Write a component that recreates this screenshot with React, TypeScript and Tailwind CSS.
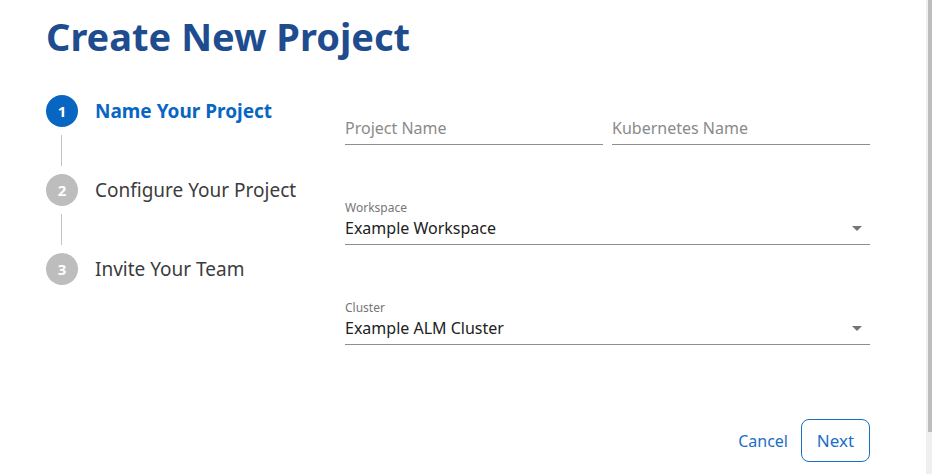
import { useState } from "react";

const steps = [
  { n: 1, label: "Name Your Project" },
  { n: 2, label: "Configure Your Project" },
  { n: 3, label: "Invite Your Team" },
];

function Caret() {
  return (
    <svg width="10" height="5" viewBox="0 0 10 5" className="shrink-0">
      <path d="M0 0h10L5 5z" fill="#757575" />
    </svg>
  );
}

function Select({ label, value }: { label: string; value: string }) {
  return (
    <div className="border-b border-[#8e8e8e] pb-[4px]">
      <div className="text-[12px] leading-[16px] text-[#767676]">{label}</div>
      <div className="flex items-center justify-between pr-[8px]">
        <span className="text-[16px] leading-[24px] text-[#212121]">{value}</span>
        <Caret />
      </div>
    </div>
  );
}

export default function App() {
  const [active] = useState(1);

  return (
    <div className="flex h-[474px] w-full overflow-hidden bg-white font-['Noto_Sans',sans-serif]">
      <div className="flex-1 pl-[46px] pt-[13px]">
        <h1 className="text-[38px] font-bold leading-[46px] text-[#1e4c8f]">Create New Project</h1>

        <div className="mt-[36px] flex">
          {/* Stepper */}
          <div className="w-[299px]">
            {steps.map((s, i) => (
              <div key={s.n}>
                <div className="flex h-[32px] items-center gap-[17px]">
                  <div
                    className={
                      s.n === active
                        ? "flex h-[32px] w-[32px] items-center justify-center rounded-full bg-[#0866c3] text-[15px] font-bold text-white"
                        : "flex h-[32px] w-[32px] items-center justify-center rounded-full bg-[#bdbdbd] text-[15px] font-bold text-white"
                    }
                  >
                    {s.n}
                  </div>
                  <span
                    className={
                      s.n === active
                        ? "text-[19px] font-bold text-[#0866c3]"
                        : "text-[19px] text-[#3c3c3c]"
                    }
                  >
                    {s.label}
                  </span>
                </div>
                {i < steps.length - 1 && (
                  <div className="my-[8px] ml-[15px] h-[31px] w-[1px] bg-[#c4c4c4]" />
                )}
              </div>
            ))}
          </div>

          {/* Form */}
          <div className="w-[525px] pt-[21px]">
            <div className="flex gap-[9px]">
              <div className="flex-1 border-b border-[#8e8e8e] pb-[4px]">
                <span className="text-[16px] leading-[24px] text-[#8a8a8a]">Project Name</span>
              </div>
              <div className="flex-1 border-b border-[#8e8e8e] pb-[4px]">
                <span className="text-[16px] leading-[24px] text-[#8a8a8a]">Kubernetes Name</span>
              </div>
            </div>

            <div className="mt-[55px]">
              <Select label="Workspace" value="Example Workspace" />
            </div>
            <div className="mt-[55px]">
              <Select label="Cluster" value="Example ALM Cluster" />
            </div>

            <div className="mt-[74px] flex items-center justify-end gap-[13px]">
              <button className="text-[16px] text-[#1b6ec6]">Cancel</button>
              <button className="h-[43px] w-[69px] rounded-[8px] border border-[#1b6ec6] text-[17px] text-[#1b6ec6]">
                Next
              </button>
            </div>
          </div>
        </div>
      </div>

      {/* scrollbar */}
      <div className="w-[6px] shrink-0 bg-[#efefef]">
        <div className="ml-[2px] h-[432px] w-[4px] bg-[#bdbdbd]" />
      </div>
    </div>
  );
}
